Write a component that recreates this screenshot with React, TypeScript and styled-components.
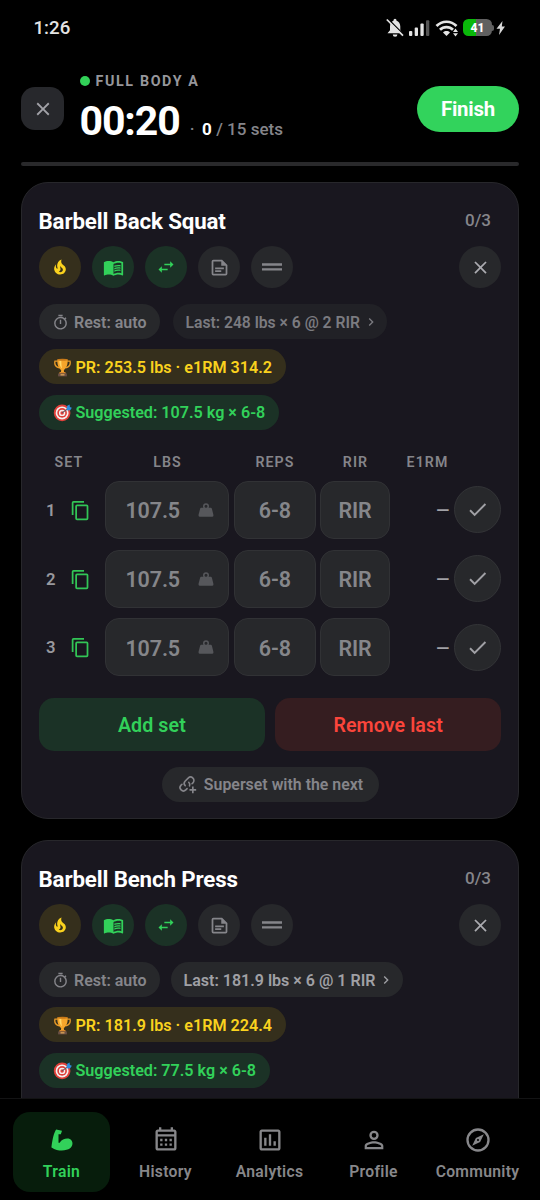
import React from 'react';
import styled, { createGlobalStyle } from 'styled-components';
import { MdMenuBook } from 'react-icons/md';

const GlobalStyle = createGlobalStyle`
  *, *::before, *::after { box-sizing: border-box; }
  html, body { margin: 0; background: #000; }
  body { font-family: Roboto, 'Liberation Sans', sans-serif; color: #fff; }
  button { font: inherit; color: inherit; border: 0; padding: 0; margin: 0; background: none; }
`;

const paths = {
  fire: 'M17.66 11.2C17.43 10.9 17.15 10.64 16.89 10.38C16.22 9.78 15.46 9.35 14.82 8.72C13.33 7.26 13 4.85 13.95 3C13 3.23 12.17 3.75 11.46 4.32C8.87 6.4 7.85 10.07 9.07 13.22C9.11 13.32 9.15 13.42 9.15 13.55C9.15 13.77 9 13.97 8.8 14.05C8.57 14.15 8.33 14.09 8.14 13.93C8.08 13.88 8.04 13.83 8 13.76C6.87 12.33 6.69 10.28 7.45 8.64C5.78 10 4.87 12.3 5 14.47C5.06 14.97 5.12 15.47 5.29 15.97C5.43 16.57 5.7 17.17 6 17.7C7.08 19.43 8.95 20.67 10.96 20.92C13.1 21.19 15.39 20.8 17.03 19.32C18.86 17.66 19.5 15 18.56 12.72L18.43 12.46C18.22 12 17.66 11.2 17.66 11.2M14.5 17.5C14.22 17.74 13.76 18 13.4 18.1C12.28 18.5 11.16 17.94 10.5 17.28C11.69 17 12.4 16.12 12.61 15.23C12.78 14.43 12.46 13.77 12.33 13C12.21 12.26 12.23 11.63 12.5 10.94C12.69 11.32 12.89 11.7 13.13 12C13.9 13 15.11 13.44 15.37 14.8C15.41 14.94 15.43 15.08 15.43 15.23C15.46 16.05 15.1 16.95 14.5 17.5Z',
  swap: 'M21 9L17 5V8H10V10H17V13M7 11L3 15L7 19V16H14V14H7V11Z',
  note: 'M15 3H5A2 2 0 0 0 3 5V19A2 2 0 0 0 5 21H19A2 2 0 0 0 21 19V9L15 3M19 19H5V5H14V10H19V19M17 14H7V12H17V14M14 17H7V15H14V17Z',
  drag: 'M2 8.3H22V10.7H2ZM2 13.2H22V15.6H2Z',
  close: 'M19 6.41L17.59 5 12 10.59 6.41 5 5 6.41 10.59 12 5 17.59 6.41 19 12 13.41 17.59 19 19 17.59 13.41 12Z',
  timer: 'M12 20A7 7 0 0 1 5 13A7 7 0 0 1 12 6A7 7 0 0 1 19 13A7 7 0 0 1 12 20M19.03 7.39L20.45 5.97C20 5.46 19.55 5 19.04 4.56L17.62 6C16.07 4.74 14.12 4 12 4A9 9 0 0 0 3 13A9 9 0 0 0 12 22C17 22 21 17.97 21 13C21 10.88 20.26 8.93 19.03 7.39M11 14H13V8H11M15 1H9V3H15V1Z',
  chevron: 'M8.59 16.58L13.17 12L8.59 7.41L10 6L16 12L10 18L8.59 16.58Z',
  copy: 'M19 21H8V7H19M19 5H8A2 2 0 0 0 6 7V21A2 2 0 0 0 8 23H19A2 2 0 0 0 21 21V7A2 2 0 0 0 19 5M16 1H4A2 2 0 0 0 2 3V17H4V3H16V1Z',
  weight: 'M12 3A4 4 0 0 1 16 7C16 7.73 15.81 8.41 15.46 9H18C18.95 9 19.75 9.67 19.95 10.56C21.96 18.57 22 18.78 22 19A2 2 0 0 1 20 21H4A2 2 0 0 1 2 19C2 18.78 2.04 18.57 4.05 10.56C4.25 9.67 5.05 9 6 9H8.54C8.19 8.41 8 7.73 8 7A4 4 0 0 1 12 3M12 5A2 2 0 0 0 10 7A2 2 0 0 0 12 9A2 2 0 0 0 14 7A2 2 0 0 0 12 5Z',
  check: 'M21 7L9 19L3.5 13.5L4.91 12.09L9 16.17L19.59 5.59L21 7Z',
  arm: 'M3 18.34C3 18.34 4 7.09 7 3L12 4L11 7.09H9V14.25H10C12 11.18 16.14 10.06 18.64 11.18C21.94 12.71 21.64 17.32 18.64 19.36C16.24 21 9 22.43 3 18.34Z',
  calendar: 'M7 11H9V13H7V11M21 5V19C21 20.11 20.11 21 19 21H5C3.89 21 3 20.1 3 19V5C3 3.9 3.9 3 5 3H6V1H8V3H16V1H18V3H19C20.11 3 21 3.9 21 5M5 7H19V5H5V7M19 19V9H5V19H19M15 13V11H17V13H15M11 13V11H13V13H11M7 15H9V17H7V15M15 17V15H17V17H15M11 17V15H13V17H11Z',
  chart: 'M9 17H7V10H9V17M13 17H11V7H13V17M17 17H15V13H17V17M19 19H5V5H19V19M19 3H5C3.9 3 3 3.9 3 5V19C3 20.1 3.9 21 5 21H19C20.1 21 21 20.1 21 19V5C21 3.9 20.1 3 19 3Z',
  account: 'M12 4A4 4 0 0 1 16 8A4 4 0 0 1 12 12A4 4 0 0 1 8 8A4 4 0 0 1 12 4M12 6A2 2 0 0 0 10 8A2 2 0 0 0 12 10A2 2 0 0 0 14 8A2 2 0 0 0 12 6M12 13C14.67 13 20 14.33 20 17V20H4V17C4 14.33 9.33 13 12 13M12 14.9C9.03 14.9 5.9 16.36 5.9 17V18.1H18.1V17C18.1 16.36 14.97 14.9 12 14.9Z',
  compass: 'M7 17L10.2 10.2L17 7L13.8 13.8L7 17M12 11.1A.9 .9 0 0 0 11.1 12A.9 .9 0 0 0 12 12.9A.9 .9 0 0 0 12.9 12A.9 .9 0 0 0 12 11.1M12 2A10 10 0 0 1 22 12A10 10 0 0 1 12 22A10 10 0 0 1 2 12A10 10 0 0 1 12 2M12 4A8 8 0 0 0 4 12A8 8 0 0 0 12 20A8 8 0 0 0 20 12A8 8 0 0 0 12 4Z',
};

type IconName = keyof typeof paths;

const Svg = styled.svg`
  display: block;
  flex: none;
`;

const Icon = ({ name, size }: { name: IconName; size: number }) => (
  <Svg width={size} height={size} viewBox="0 0 24 24" fill="currentColor">
    <path fillRule="evenodd" d={paths[name]} />
  </Svg>
);

const LinkPlusIcon = () => (
  <Svg width="20" height="20" viewBox="0 0 24 24" fill="none" stroke="currentColor" strokeWidth="1.9" strokeLinecap="round">
    <path d="M9.9 14.1C8.3 12.5 8.3 10 9.9 8.4L13.4 4.9C15 3.3 17.5 3.3 19.1 4.9C20.7 6.5 20.7 9 19.1 10.6L18 11.7" />
    <path d="M14.1 9.9C15.3 11.1 15.6 12.8 15 14.2M12.1 17.6L10.6 19.1C9 20.7 6.5 20.7 4.9 19.1C3.3 17.5 3.3 15 4.9 13.4L6 12.3" />
    <path strokeLinecap="butt" strokeWidth="2" d="M19 15V23M15 19H23" />
  </Svg>
);

const TrophyIcon = () => (
  <Svg width="19" height="19" viewBox="0 0 24 24">
    <path d="M6 4H2.5C1.5 8.5 4 11.5 8 12.5M18 4h3.5C22.5 8.5 20 11.5 16 12.5" fill="none" stroke="#e79a28" strokeWidth="1.7" />
    <path d="M5.5 2h13c.3 6-1.2 11-4.8 13.2l.3 3.3h-4l.3-3.3C6.7 13 5.2 8 5.5 2z" fill="#f5a52b" />
    <path d="M8 3h2.5c0 4 .3 7.5 1 10C9 11.5 7.9 7.5 8 3z" fill="#ffd768" />
    <ellipse cx="12" cy="2.3" rx="6.5" ry="1.2" fill="#c97a19" />
    <path d="M8.5 17.8h7l1 2h-9z" fill="#d8872a" />
    <path d="M6.5 19.5h11v3.7h-11z" fill="#6b5046" />
    <path d="M9.5 20.4h5v1.7h-5z" fill="#dba254" />
  </Svg>
);

const TargetIcon = () => (
  <Svg width="19" height="19" viewBox="0 0 24 24">
    <circle cx="11.5" cy="12.5" r="10.5" fill="#e0403a" />
    <circle cx="11.5" cy="12.5" r="8.2" fill="#f4efef" />
    <circle cx="11.5" cy="12.5" r="6.1" fill="#e0403a" />
    <circle cx="11.5" cy="12.5" r="4" fill="#f4efef" />
    <circle cx="11.5" cy="12.5" r="2.2" fill="#e0403a" />
    <path d="M11.5 12.5L19 7" stroke="#5b5560" strokeWidth="1.3" />
    <path d="M17 7.5l1-4 3-1.5.3 3 2.5 1-2 3-3.5.5z" fill="#2f8bdc" />
  </Svg>
);

/* ---------- Screen frame ---------- */

const Screen = styled.div`
  width: 540px;
  height: 1200px;
  display: flex;
  flex-direction: column;
  overflow: hidden;
  background: #000;
`;

const StatusBar = styled.div`
  height: 56px;
  flex: none;
  display: flex;
  align-items: center;
  justify-content: space-between;
  padding: 0 34px 0 33.5px;
  color: #e4e4e4;
`;

const Clock = styled.span`
  font-size: 18.7px;
  font-weight: 500;
`;

const StatusIcons = styled.div`
  display: flex;
  align-items: center;
  margin-top: -1px;
`;

const Battery = styled.div`
  display: flex;
  align-items: center;
  justify-content: center;
  width: 29px;
  height: 17px;
  margin-left: 4px;
  border-radius: 5.5px;
  background: linear-gradient(90deg, #0ab80a 44%, #606060 44%);
  color: #fff;
  font-size: 12px;
  font-weight: 800;
`;

const BatteryTip = styled.span`
  width: 2px;
  height: 6px;
  border-radius: 0 2px 2px 0;
  background: #606060;
`;

/* ---------- Session header ---------- */

const Header = styled.header`
  height: 106px;
  flex: none;
  display: flex;
  align-items: center;
  padding: 0 21px;
`;

const DismissButton = styled.button`
  width: 43px;
  height: 43px;
  display: grid;
  place-items: center;
  border-radius: 14px;
  background: #27282c;
  color: #a2a2a8;
  margin-top: -1px;
`;

const Session = styled.div`
  flex: 1;
  height: 72px;
  margin-left: 15.5px;
`;

const SessionName = styled.div`
  display: flex;
  align-items: center;
  gap: 6px;
  height: 16px;
  color: #96969b;
  font-size: 14.3px;
  font-weight: 700;
  letter-spacing: 1.62px;
  white-space: nowrap;
`;

const LiveDot = styled.i`
  width: 10px;
  height: 10px;
  border-radius: 50%;
  background: #32d158;
`;

const TimerLine = styled.div`
  display: flex;
  align-items: baseline;
  margin-top: 8px;
  color: #85858a;
  font-size: 17px;
  font-weight: 500;
  white-space: pre;
`;

const Elapsed = styled.span`
  margin-right: 10px;
  color: #fff;
  font-size: 41px;
  line-height: 48px;
  font-weight: 700;
  letter-spacing: -1.1px;
`;

const DoneCount = styled.b`
  margin: 0 4.5px 0 7.5px;
  color: #fff;
  font-weight: 700;
`;

const FinishButton = styled.button`
  width: 102px;
  height: 46px;
  border-radius: 23px;
  background: #32d35c;
  color: #fff;
  font-size: 20.4px;
  font-weight: 700;
  letter-spacing: -0.2px;
`;

const ProgressTrack = styled.div`
  height: 4px;
  flex: none;
  margin: 0 21px;
  border-radius: 2px;
  background: #29292b;
`;

/* ---------- Exercise card ---------- */

const Exercises = styled.main`
  flex: 1;
  min-height: 0;
  overflow: hidden;
  display: flex;
  flex-direction: column;
  gap: 21px;
  padding: 16px 21px 0;
`;

const Card = styled.section`
  flex: none;
  height: 637px;
  padding: 21px 17px 0;
  border: 1px solid #27272b;
  border-radius: 27px;
  background: #19171f;
`;

const CardHead = styled.div`
  display: flex;
  align-items: center;
  justify-content: space-between;
  height: 34px;
  padding-right: 10px;
`;

const ExerciseName = styled.h2`
  margin: 0 0 0 -0.5px;
  font-size: 22.3px;
  font-weight: 700;
  letter-spacing: -0.14px;
  white-space: nowrap;
`;

const SetCount = styled.span`
  color: #85858a;
  font-size: 17px;
  font-weight: 500;
  margin-top: -2px;
`;

const Actions = styled.div`
  display: flex;
  gap: 11px;
  margin-top: 8px;
`;

type Tone = 'gold' | 'green' | 'gray' | 'dim' | 'red';

const toneBg: Record<Tone, string> = {
  gold: '#352f1c',
  green: '#1b3226',
  gray: '#27282b',
  dim: '#212126',
  red: '#351d20',
};
const toneFg: Record<Tone, string> = {
  gold: '#fad21e',
  green: '#32d15a',
  gray: '#85858a',
  dim: '#7b7b80',
  red: '#fb453b',
};

const RoundButton = styled.button<{ $tone: Tone; $end?: boolean }>`
  width: 42px;
  height: 42px;
  display: grid;
  place-items: center;
  border-radius: 50%;
  margin-left: ${(p) => (p.$end ? 'auto' : 0)};
  background: ${(p) => toneBg[p.$tone]};
  color: ${(p) => (p.$end ? '#ababb0' : toneFg[p.$tone])};
`;

const Chips = styled.div<{ $gap: number }>`
  display: flex;
  gap: ${(p) => p.$gap}px;
  margin-top: 16px;
`;

const Chip = styled.div<{ $tone: Tone; $width: number }>`
  display: flex;
  align-items: center;
  justify-content: center;
  gap: 5px;
  width: ${(p) => p.$width}px;
  height: 35px;
  padding-top: 1px;
  border-radius: 18px;
  background: ${(p) => toneBg[p.$tone]};
  color: ${(p) => toneFg[p.$tone]};
  font-size: 16px;
  font-weight: 600;
  white-space: nowrap;
`;

const LastChip = styled(Chip)<{ $faded: boolean }>`
  justify-content: flex-start;
  gap: 3px;
  padding-left: 13px;
  color: ${(p) => (p.$faded ? '#7b7b80' : '#a0a0a5')};
  font-size: ${(p) => (p.$faded ? 15.7 : 16.05)}px;
`;

const RecordChip = styled(Chip)`
  justify-content: flex-start;
  gap: 4px;
  padding-left: 13.5px;
  font-size: 16.15px;
`;

const ChipStack = styled.div`
  display: flex;
  flex-direction: column;
  gap: 10.5px;
  margin-top: 10.4px;
`;

const TableHead = styled.div`
  display: grid;
  grid-template-columns: 60px 137px 78px 83px 61px;
  align-items: center;
  height: 20px;
  margin-top: 22px;
  color: #85858a;
  font-size: 14.2px;
  font-weight: 600;
  letter-spacing: 1.1px;
  text-align: center;
`;

const SetRows = styled.div`
  display: flex;
  flex-direction: column;
  gap: 10.7px;
  margin-top: 9px;
`;

const SetRow = styled.div`
  display: grid;
  grid-template-columns: 61.4px 124.5px 81.5px 69.5px 55.1px 47px;
  column-gap: 4.6px;
  align-items: center;
  height: 58px;
`;

const SetLabel = styled.div`
  display: flex;
  align-items: center;
  justify-content: space-between;
  padding: 1px 9.2px 0 7px;
  color: #98989d;
  font-size: 16.7px;
  font-weight: 600;
`;

const CopyButton = styled.button`
  color: #32c556;
`;

const Field = styled.div<{ $icon?: boolean }>`
  display: flex;
  align-items: center;
  justify-content: ${(p) => (p.$icon ? 'space-between' : 'center')};
  height: 58px;
  padding: ${(p) => (p.$icon ? '2px 13px 0 19.5px' : '2px 0 0')};
  border: 1px solid #313235;
  border-radius: 14px;
  background: #27282b;
  color: #85868a;
  font-size: 21.5px;
  font-weight: 600;
  letter-spacing: -0.15px;
`;

const WeightMark = styled.span`
  color: #56575b;
  margin-top: -2px;
`;

const Estimate = styled.span`
  justify-self: end;
  width: 13px;
  padding-top: 1px;
  color: #a2a2a7;
  font-size: 17px;
  line-height: 20px;
  font-weight: 700;
`;

const DoneButton = styled.button`
  width: 47px;
  height: 47px;
  display: grid;
  place-items: center;
  border: 1px solid #333437;
  border-radius: 50%;
  background: #27282b;
  color: #a0a0a5;
`;

const SetActions = styled.div`
  display: grid;
  grid-template-columns: 1fr 1fr;
  gap: 10.5px;
  margin-top: 21.5px;
`;

const WideButton = styled.button<{ $tone: Tone }>`
  height: 53px;
  padding-top: 3px;
  border-radius: 15px;
  background: ${(p) => toneBg[p.$tone]};
  color: ${(p) => toneFg[p.$tone]};
  font-size: 19.6px;
  font-weight: 600;
  letter-spacing: 0.1px;
`;

const SupersetRow = styled.div`
  display: flex;
  justify-content: center;
  margin-top: 16px;
`;

const SupersetChip = styled(Chip)`
  gap: 7px;
  padding-top: 0;
  font-size: 15.9px;
`;

/* ---------- Bottom navigation ---------- */

const TabBar = styled.nav`
  height: 102px;
  flex: none;
  display: flex;
  gap: 7px;
  padding: 13px 14px 0 13px;
  border-top: 1px solid #131314;
  background: #000;
`;

const Tab = styled.button<{ $active?: boolean }>`
  flex: 1 1 0;
  min-width: 0;
  height: 80px;
  display: flex;
  flex-direction: column;
  align-items: center;
  gap: 8px;
  padding-top: 14px;
  border-radius: 17px;
  background: ${(p) => (p.$active ? '#071d0c' : 'transparent')};
  color: ${(p) => (p.$active ? '#32d15a' : '#87878a')};
  font-size: 15.7px;
  line-height: 19px;
  font-weight: 600;
  letter-spacing: 0.3px;
  white-space: nowrap;
`;

interface Exercise {
  name: string;
  last: string;
  lastWidth: number;
  faded: boolean;
  record: string;
  suggestion: string;
  suggestionWidth: number;
  sets: string[];
}

const exercises: Exercise[] = [
  { name: 'Barbell Back Squat', last: 'Last: 248 lbs × 6 @ 2 RIR', lastWidth: 214, faded: true, record: 'PR: 253.5 lbs · e1RM 314.2', suggestion: 'Suggested: 107.5 kg × 6-8', suggestionWidth: 239.5, sets: ['107.5', '107.5', '107.5'] },
  { name: 'Barbell Bench Press', last: 'Last: 181.9 lbs × 6 @ 1 RIR', lastWidth: 232.5, faded: false, record: 'PR: 181.9 lbs · e1RM 224.4', suggestion: 'Suggested: 77.5 kg × 6-8', suggestionWidth: 230.5, sets: [] },
];

const SetTable = ({ sets }: { sets: string[] }) => (
  <>
    <TableHead>
      <span>SET</span><span>LBS</span><span>REPS</span><span>RIR</span><span>E1RM</span>
    </TableHead>
    <SetRows>
      {sets.map((load, i) => (
        <SetRow key={i}>
          <SetLabel>{i + 1}<CopyButton><Icon name="copy" size={21} /></CopyButton></SetLabel>
          <Field $icon>{load}<WeightMark><Icon name="weight" size={18} /></WeightMark></Field>
          <Field>6-8</Field>
          <Field>RIR</Field>
          <Estimate>—</Estimate>
          <DoneButton><Icon name="check" size={23} /></DoneButton>
        </SetRow>
      ))}
    </SetRows>
    <SetActions>
      <WideButton $tone="green">Add set</WideButton>
      <WideButton $tone="red">Remove last</WideButton>
    </SetActions>
    <SupersetRow>
      <SupersetChip $tone="gray" $width={217}><LinkPlusIcon />Superset with the next</SupersetChip>
    </SupersetRow>
  </>
);

const ExerciseCard = ({ exercise }: { exercise: Exercise }) => (
  <Card>
    <CardHead>
      <ExerciseName>{exercise.name}</ExerciseName>
      <SetCount>0/3</SetCount>
    </CardHead>
    <Actions>
      <RoundButton $tone="gold"><Icon name="fire" size={20} /></RoundButton>
      <RoundButton $tone="green"><MdMenuBook size={21} /></RoundButton>
      <RoundButton $tone="green"><Icon name="swap" size={20} /></RoundButton>
      <RoundButton $tone="gray"><Icon name="note" size={21} /></RoundButton>
      <RoundButton $tone="gray"><Icon name="drag" size={24} /></RoundButton>
      <RoundButton $tone="gray" $end><Icon name="close" size={21} /></RoundButton>
    </Actions>
    <Chips $gap={exercise.faded ? 13 : 11}>
      <Chip $tone="gray" $width={120.5}><Icon name="timer" size={17} />Rest: auto</Chip>
      <LastChip $tone={exercise.faded ? 'dim' : 'gray'} $width={exercise.lastWidth} $faded={exercise.faded}>
        {exercise.last}<Icon name="chevron" size={16} />
      </LastChip>
    </Chips>
    <ChipStack>
      <RecordChip $tone="gold" $width={246.5}><TrophyIcon />{exercise.record}</RecordChip>
      <RecordChip $tone="green" $width={exercise.suggestionWidth}><TargetIcon />{exercise.suggestion}</RecordChip>
    </ChipStack>
    {exercise.sets.length > 0 && <SetTable sets={exercise.sets} />}
  </Card>
);

const tabs: { label: string; icon: IconName; active?: boolean }[] = [
  { label: 'Train', icon: 'arm', active: true },
  { label: 'History', icon: 'calendar' },
  { label: 'Analytics', icon: 'chart' },
  { label: 'Profile', icon: 'account' },
  { label: 'Community', icon: 'compass' },
];

export default function App() {
  return (
    <>
      <GlobalStyle />
      <Screen>
        <StatusBar>
          <Clock>1:26</Clock>
          <StatusIcons>
            <Svg width="73" height="20" viewBox="0 0 73 20" fill="#e4e4e4">
              <path d="M1.5 15.2L4 12.3V8.5C4 5.3 5.5 3.4 7.5 2.8V2.2a1.5 1.5 0 0 1 3 0v.6c2.3.7 3.8 2.7 3.8 5.7V12.3l2 2.9zM6.8 16.4h4.6a2.3 2.3 0 0 1-4.6 0z" />
              <path d="M1.8 .8L18 17" stroke="#000" strokeWidth="1.6" />
              <path d="M.8 1.5L17 17.7" stroke="#e4e4e4" strokeWidth="1.7" />
              <rect x="23" y="13" width="3.3" height="5" rx="1" />
              <rect x="28.7" y="9.5" width="3.3" height="8.5" rx="1" />
              <rect x="34.4" y="5.5" width="3.3" height="12.5" rx="1" />
              <rect x="40" y="2.3" width="3.3" height="15.7" rx="1" fill="#555" />
              <path d="M50.5 8C56 2.3 65 2.3 70.5 8" fill="none" stroke="#e4e4e4" strokeWidth="2.7" />
              <path d="M54 11.8C57.5 8.2 63.5 8.2 67 11.8" fill="none" stroke="#e4e4e4" strokeWidth="2.7" />
              <path d="M57 14.5C59 12.6 62 12.6 64 14.5L60.5 18z" />
              <path d="M67 14l2.5-3.5L72 14zM67 15.2h5l-2.5 3.3z" />
            </Svg>
            <Battery>41</Battery>
            <BatteryTip />
            <Svg width="12" height="16" viewBox="0 0 12 16" fill="#d8d8d8">
              <path d="M8.5 1L2.5 8.8H6L5 15L11 6.5H7.8z" />
            </Svg>
          </StatusIcons>
        </StatusBar>

        <Header>
          <DismissButton><Icon name="close" size={22} /></DismissButton>
          <Session>
            <SessionName><LiveDot />FULL BODY A</SessionName>
            <TimerLine>
              <Elapsed>00:20</Elapsed>·<DoneCount>0</DoneCount>/ 15 sets
            </TimerLine>
          </Session>
          <FinishButton>Finish</FinishButton>
        </Header>
        <ProgressTrack />

        <Exercises>
          {exercises.map((exercise) => (
            <ExerciseCard key={exercise.name} exercise={exercise} />
          ))}
        </Exercises>

        <TabBar>
          {tabs.map((tab) => (
            <Tab key={tab.label} $active={tab.active}>
              <Icon name={tab.icon} size={28} />
              {tab.label}
            </Tab>
          ))}
        </TabBar>
      </Screen>
    </>
  );
}
